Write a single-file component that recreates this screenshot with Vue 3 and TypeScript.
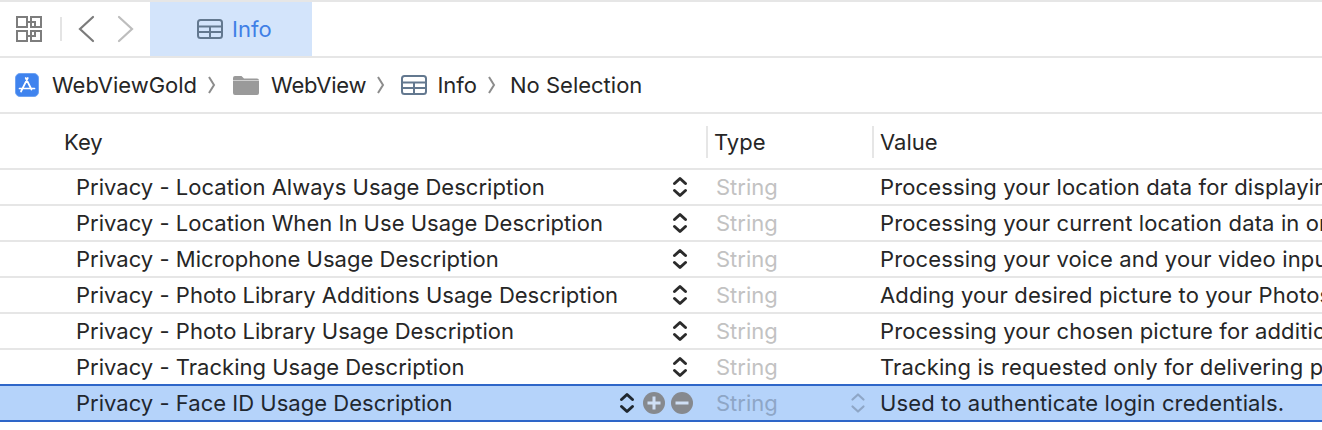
<script setup lang="ts">
const rows: [string, string][] = [
  ['Privacy - Location Always Usage Description', 'Processing your location data for displaying your position on the map'],
  ['Privacy - Location When In Use Usage Description', 'Processing your current location data in order to show nearby places'],
  ['Privacy - Microphone Usage Description', 'Processing your voice and your video input for recording'],
  ['Privacy - Photo Library Additions Usage Description', 'Adding your desired picture to your Photos library on this device'],
  ['Privacy - Photo Library Usage Description', 'Processing your chosen picture for additional editing and uploads'],
  ['Privacy - Tracking Usage Description', 'Tracking is requested only for delivering personalized advertising'],
]
</script>

<template>
  <div class="page">
    <header class="toolbar">
      <svg class="grid-ic" width="28" height="28" viewBox="0 0 28 28" fill="none" stroke="#7d7d7d" stroke-width="2">
        <path d="M2 2h10v10H2zM2 16h10v10H2zM16 2h10v10H16zM16 16h10v10H16z" />
        <path d="M12 7h8v5M12 21h8v-5" />
      </svg>
      <span class="sep"></span>
      <svg class="nav back" width="18" height="28" viewBox="0 0 18 28" fill="none" stroke="#7b7b7b" stroke-width="2.2" stroke-linecap="round">
        <path d="M16 2 3 14l13 12" />
      </svg>
      <svg class="nav fwd" width="18" height="28" viewBox="0 0 18 28" fill="none" stroke="#bdbdbd" stroke-width="2.2" stroke-linecap="round">
        <path d="M2 2l13 12L2 26" />
      </svg>
      <div class="tab">
        <svg width="26" height="20" viewBox="0 0 26 20" fill="none" stroke="#63788f" stroke-width="2">
          <rect x="1" y="1" width="24" height="18" rx="2.5" />
          <path d="M1 7.5h24M1 13h24M13 7.5V19" />
        </svg>
        <span>Info</span>
      </div>
    </header>

    <nav class="crumbs">
      <svg class="app" width="24" height="24" viewBox="0 0 24 24">
        <rect x="0.5" y="0.5" width="23" height="23" rx="4.5" fill="#3f83ee" stroke="#6fa3f2" />
        <path d="M12.8 5 7.5 15.5M10.7 5l5.8 11.5M4.5 15.5h15M7.5 15.5l-1.5 3" fill="none" stroke="#fff" stroke-width="1.7" stroke-linecap="round" />
      </svg>
      <span class="c1">WebViewGold</span>
      <svg class="chev" width="8" height="20" viewBox="0 0 8 20" fill="none" stroke="#8c8c8c" stroke-width="2"><path d="M1 2l5 8-5 8" /></svg>
      <svg class="folder" width="26" height="20" viewBox="0 0 26 20">
        <path d="M0 3a2 2 0 0 1 2-2h6.500l2.500 2.500h13a2 2 0 0 1 2 2V18a2 2 0 0 1-2 2H2a2 2 0 0 1-2-2z" fill="#9a9a9a" />
        <path d="M0 5.500h26" stroke="#d0d0d0" stroke-width="1" />
      </svg>
      <span class="c2">WebView</span>
      <svg class="chev" width="8" height="20" viewBox="0 0 8 20" fill="none" stroke="#8c8c8c" stroke-width="2"><path d="M1 2l5 8-5 8" /></svg>
      <svg class="tbl" width="26" height="20" viewBox="0 0 26 20" fill="none" stroke="#63788f" stroke-width="2">
        <rect x="1" y="1" width="24" height="18" rx="2.5" />
        <path d="M1 7.500h24M1 13h24M13 7.500V19" />
      </svg>
      <span class="c3">Info</span>
      <svg class="chev" width="8" height="20" viewBox="0 0 8 20" fill="none" stroke="#8c8c8c" stroke-width="2"><path d="M1 2l5 8-5 8" /></svg>
      <span class="c4">No Selection</span>
    </nav>

    <div class="head">
      <div class="col-key">Key</div>
      <div class="col-type"><span>Type</span></div>
      <div class="col-val"><span>Value</span></div>
    </div>

    <div v-for="r in rows" :key="r[0]" class="row">
      <div class="key">
        <span class="label">{{ r[0] }}</span>
        <svg class="updown" width="16" height="24" viewBox="0 0 16 24" fill="none" stroke="#2b2b2b" stroke-width="3" stroke-linecap="round" stroke-linejoin="round">
          <path d="M2.500 8.500 8 3.500l5.500 5M2.500 15.500 8 20.500l5.500-5" />
        </svg>
      </div>
      <div class="type">String</div>
      <div class="val">{{ r[1] }}</div>
    </div>

    <div class="row selected">
      <div class="key">
        <span class="label">Privacy - Face ID Usage Description</span>
        <svg class="updown" width="16" height="24" viewBox="0 0 16 24" fill="none" stroke="#1f2730" stroke-width="3" stroke-linecap="round" stroke-linejoin="round">
          <path d="M2.500 8.500 8 3.500l5.500 5M2.500 15.500 8 20.500l5.500-5" />
        </svg>
        <svg class="round" width="22" height="22" viewBox="0 0 22 22"><circle cx="11" cy="11" r="11" fill="#86898e" /><path d="M11 4.500v13M4.500 11h13" stroke="#cfdff5" stroke-width="3" /></svg>
        <svg class="round" width="22" height="22" viewBox="0 0 22 22"><circle cx="11" cy="11" r="11" fill="#86898e" /><path d="M4.500 11h13" stroke="#cfdff5" stroke-width="3" /></svg>
      </div>
      <div class="type">
        <span>String</span>
        <svg class="updown2" width="16" height="24" viewBox="0 0 16 24" fill="none" stroke="#8ea6c6" stroke-width="2.200" stroke-linecap="round" stroke-linejoin="round">
          <path d="M2.500 8.500 8 3.500l5.500 5M2.500 15.500 8 20.500l5.500-5" />
        </svg>
      </div>
      <div class="val">Used to authenticate login credentials.</div>
    </div>
  </div>
</template>

<style>
html, body { margin: 0; background: #fff; overflow: hidden; }
</style>

<style scoped>
.page {
  width: 1322px;
  height: 430px;
  overflow: hidden;
  font-family: Inter, "Liberation Sans", sans-serif;
  font-size: 22px;
  color: #262626;
  background: #fff;
}
.toolbar {
  height: 54px;
  border-top: 2px solid #e6e6e6;
  border-bottom: 2px solid #e6e6e6;
  display: flex;
  align-items: center;
  padding-left: 15px;
}
.grid-ic { flex: none; }
.sep { width: 2px; height: 24px; background: #e4e4e4; margin-left: 17px; }
.back { margin-left: 15px; }
.fwd { margin-left: 22px; }
.tab {
  margin-left: 15px;
  width: 162px;
  height: 54px;
  padding-left: 47px;
  box-sizing: border-box;
  background: #d3e4fb;
  color: #3f7fe6;
  display: flex;
  align-items: center;
  gap: 9px;
}
.crumbs {
  height: 54px;
  border-bottom: 2px solid #e6e6e6;
  display: flex;
  align-items: center;
  padding-left: 15px;
}
.c1 { margin-left: 13px; }
.crumbs .chev { margin-left: 11px; }
.folder { margin-left: 17px; }
.c2 { margin-left: 12px; letter-spacing: -0.2px; }
.tbl { margin-left: 16px; }
.c3 { margin-left: 10px; }
.c4 { margin-left: 14px; }
.head {
  height: 52px;
  padding-top: 2px;
  border-bottom: 2px solid #e6e6e6;
  display: flex;
  align-items: center;
}
.col-key { width: 706px; padding-left: 64px; box-sizing: border-box; }
.col-type { width: 166px; height: 32px; border-left: 2px solid #e6e6e6; padding-left: 6px; box-sizing: border-box; display: flex; align-items: center; }
.col-val { flex: 1; height: 32px; border-left: 2px solid #e6e6e6; padding-left: 6px; display: flex; align-items: center; }
.row {
  height: 34px;
  border-bottom: 2px solid #e6e6e6;
  display: flex;
  align-items: center;
  white-space: nowrap;
}
.key { width: 708px; padding-left: 76px; padding-right: 20px; box-sizing: border-box; display: flex; align-items: center; letter-spacing: 0.02px; }
.label { flex: 1; }
.type { width: 164px; padding-left: 8px; box-sizing: border-box; color: #c2c2c2; display: flex; align-items: center; justify-content: space-between; padding-right: 6px; }
.val { width: 450px; flex: none; overflow: visible; padding-left: 8px; box-sizing: border-box; letter-spacing: 0.13px; }
.selected {
  background: #b5d3fa;
  border-top: 2px solid #2e66c8;
  border-bottom: 2px solid #2e66c8;
  height: 34px;
  margin-top: -2px;
  color: #1f2730;
}
.selected .key { padding-right: 15px; gap: 6px; }
.selected .label { flex: 1; }
.selected .updown { margin-right: 2px; }
.selected .type { color: #8ea6c6; }
</style>
